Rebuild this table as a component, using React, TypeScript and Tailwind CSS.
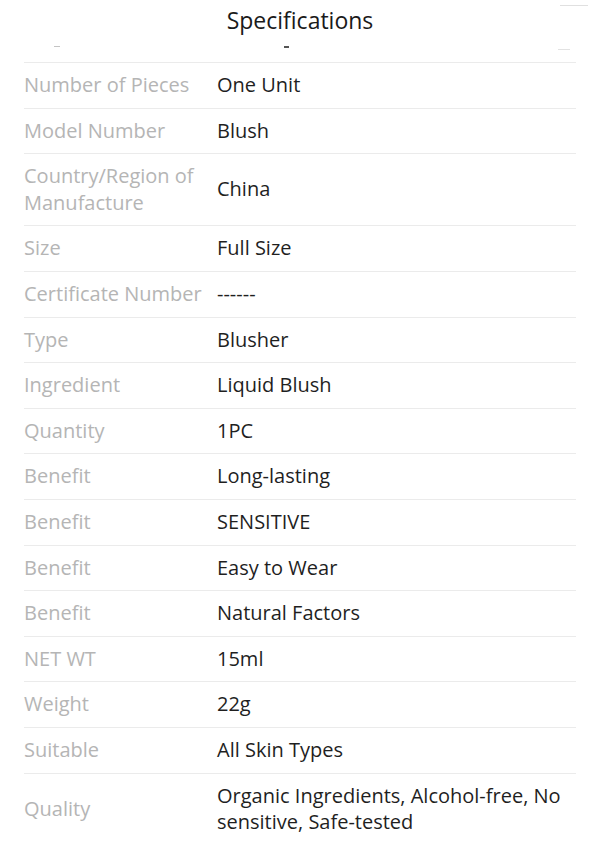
import React from "react";

const specs: [string, string][] = [
  ["Number of Pieces", "One Unit"],
  ["Model Number", "Blush"],
  ["Country/Region of Manufacture", "China"],
  ["Size", "Full Size"],
  ["Certificate Number", "------"],
  ["Type", "Blusher"],
  ["Ingredient", "Liquid Blush"],
  ["Quantity", "1PC"],
  ["Benefit", "Long-lasting"],
  ["Benefit", "SENSITIVE"],
  ["Benefit", "Easy to Wear"],
  ["Benefit", "Natural Factors"],
  ["NET WT", "15ml"],
  ["Weight", "22g"],
  ["Suitable", "All Skin Types"],
  ["Quality", "Organic Ingredients, Alcohol-free, No sensitive, Safe-tested"],
];

export default function App() {
  return (
    <div className="h-[845px] w-[600px] overflow-hidden bg-white font-['Open_Sans',sans-serif]">
      {/* Header */}
      <div className="flex h-[62px] flex-col">
        <div className="flex h-[6px] justify-end pr-[12px] pt-[5px]">
          <div className="h-[1px] w-[28px] bg-[#e0e0e0]" />
        </div>
        <h1 className="text-center text-[23px] leading-[28px] text-[#1a1a1a]">
          Specifications
        </h1>
        {/* cut-off remnants of the row above */}
        <div className="mt-[12px] flex items-start">
          <div className="ml-[54px] h-[1px] w-[6px] bg-[#c4c4c4]" />
          <div className="ml-[224px] h-[2px] w-[5px] bg-[#555]" />
          <div className="ml-[269px] mt-[3px] h-[1px] w-[12px] bg-[#e2e2e2]" />
        </div>
      </div>

      <div className="mx-[24px]">
        {specs.map(([label, value], i) => (
          <div
            key={i}
            className="flex items-center border-t border-[#ebebeb] py-[9px] text-[20px] leading-[26.6px]"
          >
            <div className="w-[193px] shrink-0 pr-2 text-[#b5b5b5]">{label}</div>
            <div className="flex-1 pr-2 text-[#1f1f1f]">{value}</div>
          </div>
        ))}
      </div>
    </div>
  );
}
